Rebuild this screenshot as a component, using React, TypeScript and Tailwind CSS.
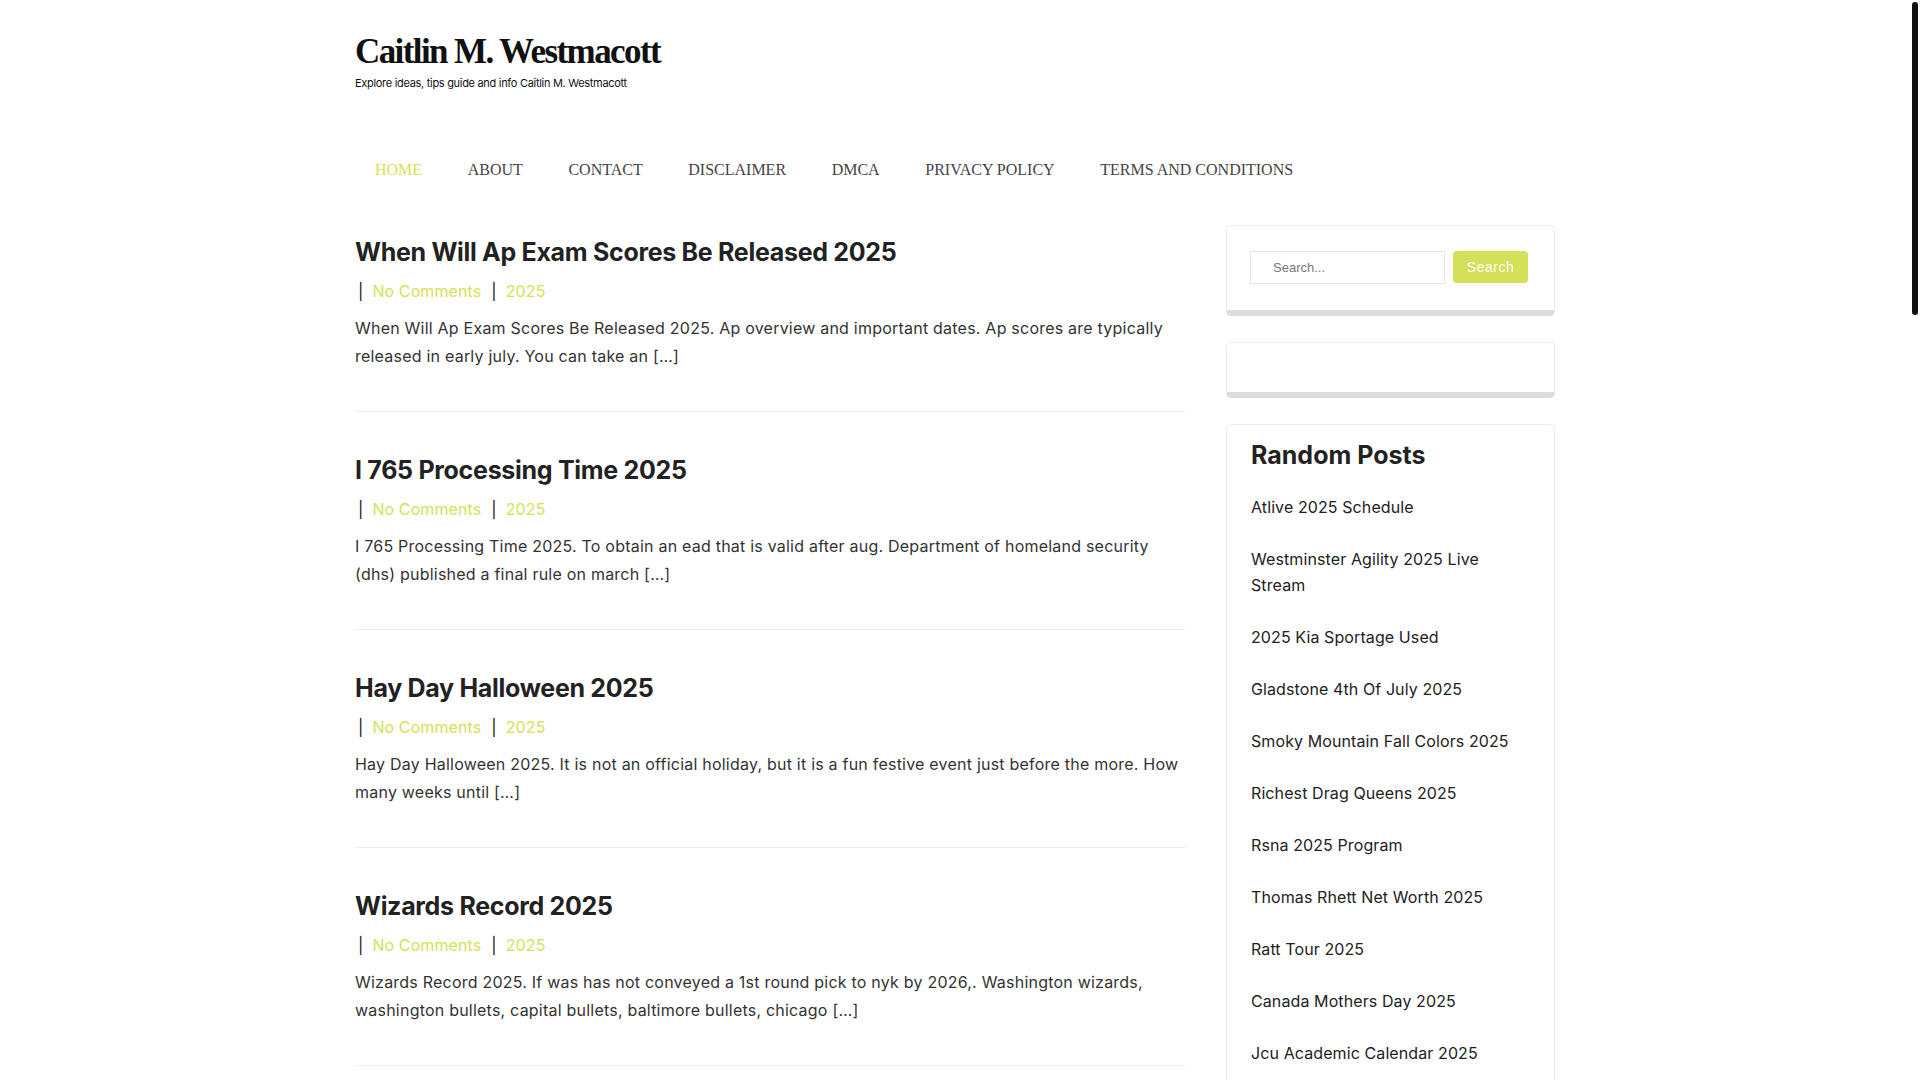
const posts = [
  {
    title: "When Will Ap Exam Scores Be Released 2025",
    excerpt:
      "When Will Ap Exam Scores Be Released 2025. Ap overview and important dates. Ap scores are typically released in early july. You can take an […]",
  },
  {
    title: "I 765 Processing Time 2025",
    excerpt:
      "I 765 Processing Time 2025. To obtain an ead that is valid after aug. Department of homeland security (dhs) published a final rule on march […]",
  },
  {
    title: "Hay Day Halloween 2025",
    excerpt:
      "Hay Day Halloween 2025. It is not an official holiday, but it is a fun festive event just before the more. How many weeks until […]",
  },
  {
    title: "Wizards Record 2025",
    excerpt:
      "Wizards Record 2025. If was has not conveyed a 1st round pick to nyk by 2026,. Washington wizards, washington bullets, capital bullets, baltimore bullets, chicago […]",
  },
];

const navItems = [
  "HOME",
  "ABOUT",
  "CONTACT",
  "DISCLAIMER",
  "DMCA",
  "PRIVACY POLICY",
  "TERMS AND CONDITIONS",
];

const randomPosts = [
  "Atlive 2025 Schedule",
  "Westminster Agility 2025 Live Stream",
  "2025 Kia Sportage Used",
  "Gladstone 4th Of July 2025",
  "Smoky Mountain Fall Colors 2025",
  "Richest Drag Queens 2025",
  "Rsna 2025 Program",
  "Thomas Rhett Net Worth 2025",
  "Ratt Tour 2025",
  "Canada Mothers Day 2025",
  "Jcu Academic Calendar 2025",
];

const sans = "font-['Inter','Noto_Sans',sans-serif]";

function PostItem({ title, excerpt }: { title: string; excerpt: string }) {
  return (
    <article className="border-b border-[#ececec] pb-[41px] mb-[40px]">
      <h2 className="text-[25px] leading-[36px] font-bold tracking-[-0.3px] text-[#222]">
        {title}
      </h2>
      <div className="mt-[9px] flex items-center text-[16px] leading-[24px] tracking-[0.1px]">
        <span className="ml-[3px] text-[#111]">|</span>
        <a href="#" className="ml-[9px] text-[#d4e157]">
          No Comments
        </a>
        <span className="ml-[10px] text-[#111]">|</span>
        <a href="#" className="ml-[9px] text-[#d4e157]">
          2025
        </a>
      </div>
      <p className="mt-[11px] text-[16px] leading-[28px] tracking-[0.22px] text-[#333]">
        {excerpt}
      </p>
    </article>
  );
}

export default function App() {
  return (
    <div className="h-screen overflow-hidden flex bg-white">
      <div className={`flex-1 overflow-hidden ${sans}`}>
        <div className="w-[1200px] mx-auto">
          <header className="pt-[30px]">
            <h1 className="font-['Liberation_Serif',serif] font-bold text-[35px] leading-[43px] tracking-[-1.6px] text-[#111]">
              Caitlin M. Westmacott
            </h1>
            <p className="mt-[2px] text-[11px] leading-[16px] tracking-[-0.3px] text-[#111]">
              Explore ideas, tips guide and info Caitlin M. Westmacott
            </p>
          </header>

          <nav className="mt-[67px] flex font-['Liberation_Serif',serif] text-[16px] leading-[24px] text-[#444]">
            {navItems.map((item, i) => (
              <a
                key={item}
                href="#"
                className={`px-[20px] mr-[5.6px] ${i === 0 ? "text-[#d4e157]" : ""}`}
              >
                {item}
              </a>
            ))}
          </nav>

          <div className="mt-[43px] flex gap-[41px]">
            <main className="w-[830px] pt-[9px]">
              {posts.map((p) => (
                <PostItem key={p.title} title={p.title} excerpt={p.excerpt} />
              ))}
            </main>

            <aside className="w-[329px]">
              <div className="border border-[#ececec] border-b-[6px] border-b-[#dcdcdc] rounded-[5px] px-[23px] pt-[25px] pb-[26px]">
                <form className="flex gap-[8px]">
                  <input
                    type="text"
                    placeholder="Search..."
                    className="w-[195px] h-[33px] border border-[#e6e6e6] pl-[22px] text-[13px] font-['Liberation_Sans',sans-serif] placeholder:text-[#777] outline-none"
                  />
                  <button
                    type="button"
                    className="w-[75px] h-[32px] rounded-[4px] bg-[#d4e057] text-white text-[14px] tracking-[0.5px] font-['Liberation_Sans',sans-serif]"
                  >
                    Search
                  </button>
                </form>
              </div>

              <div className="mt-[26px] h-[56px] border border-[#ececec] border-b-[6px] border-b-[#dcdcdc] rounded-[5px]" />

              <div className="mt-[26px] border border-[#ececec] rounded-[5px] px-[24px] pt-[14px] pb-[40px]">
                <h3 className="text-[25px] leading-[32px] font-bold text-[#222]">
                  Random Posts
                </h3>
                <ul className="mt-[23px] flex flex-col gap-[26px]">
                  {randomPosts.map((t) => (
                    <li
                      key={t}
                      className="text-[16px] leading-[26px] tracking-[0.1px] text-[#222]"
                    >
                      <a href="#">{t}</a>
                    </li>
                  ))}
                </ul>
              </div>
            </aside>
          </div>
        </div>
      </div>
      <div className="w-[10px] shrink-0">
        <div className="ml-[2px] mt-[2px] w-[6px] h-[313px] rounded-full bg-[#111]" />
      </div>
    </div>
  );
}
